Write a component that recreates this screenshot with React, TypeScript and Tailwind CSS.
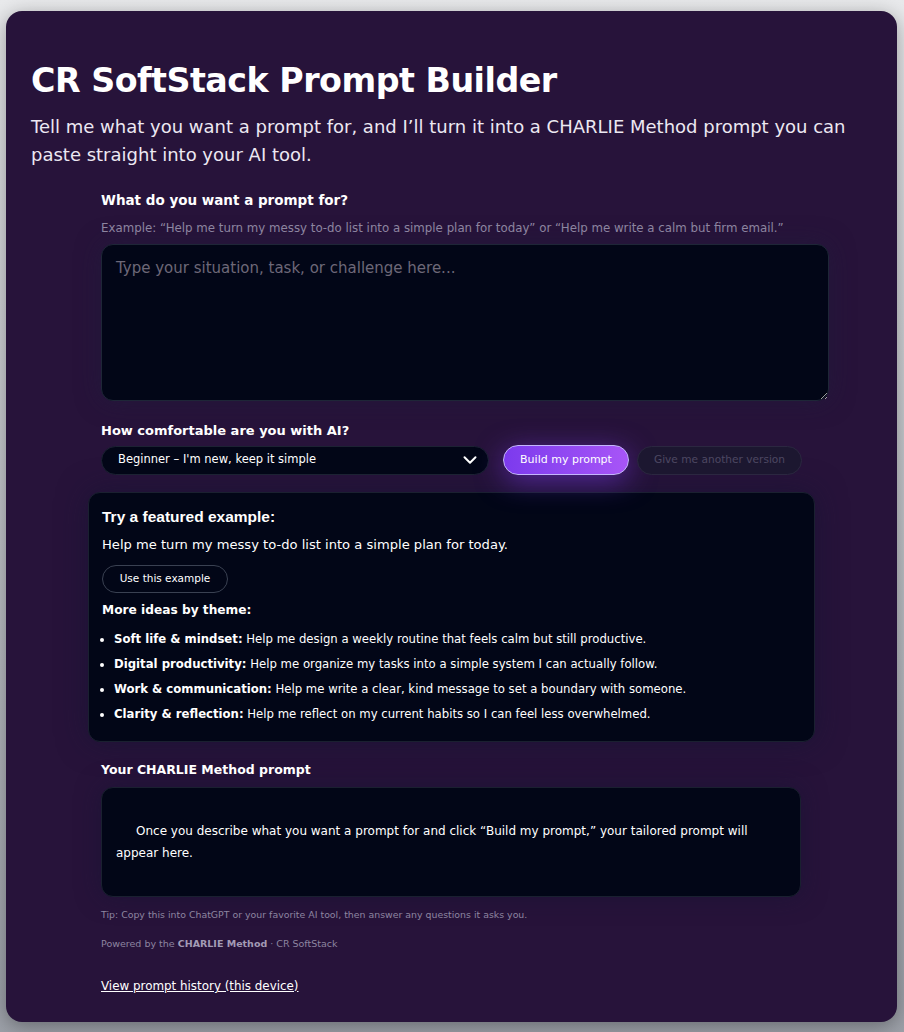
import { ChevronDown } from 'lucide-react';

const ideas = [
  { theme: 'Soft life & mindset:', text: 'Help me design a weekly routine that feels calm but still productive.' },
  { theme: 'Digital productivity:', text: 'Help me organize my tasks into a simple system I can actually follow.' },
  { theme: 'Work & communication:', text: 'Help me write a clear, kind message to set a boundary with someone.' },
  { theme: 'Clarity & reflection:', text: 'Help me reflect on my current habits so I can feel less overwhelmed.' },
];

export default function App() {
  return (
    <div
      className="min-h-screen bg-gradient-to-b from-[#e9eaec] to-[#9ca0a8] px-[6px] pt-[11px] pb-[12px]"
      style={{ fontFamily: '"DejaVu Sans", "Noto Sans", sans-serif' }}
    >
      <div className="w-[891px] rounded-2xl bg-[#27133a] px-[25px] pt-[50px] pb-[25px] text-white shadow-[0_4px_20px_rgba(0,0,0,0.35)]">
        <h1 className="text-[33.3px] leading-[40px] font-bold tracking-[-0.5px]">CR SoftStack Prompt Builder</h1>
        <p className="mt-[12px] text-[18px] leading-[28px] text-[#ece8f2]">
          Tell me what you want a prompt for, and I’ll turn it into a CHARLIE Method prompt you can paste straight into your AI tool.
        </p>

        <div className="ml-[70px] mt-[21px] w-[728px]">
          <label className="block text-[13.5px] leading-[20px] font-bold">What do you want a prompt for?</label>
          <p className="mt-[11px] text-[11.8px] leading-[14px] text-[#8d85a0]">
            Example: “Help me turn my messy to-do list into a simple plan for today” or “Help me write a calm but firm email.”
          </p>
          <textarea
            className="mt-[9px] block h-[157px] w-full rounded-xl border border-[#1e2637] bg-[#020617] px-[14px] py-[12px] text-[15px] text-white placeholder:text-[#6d6878] outline-none shadow-[0_0_24px_rgba(30,30,60,0.5)]"
            placeholder="Type your situation, task, or challenge here..."
          />

          <label className="mt-[20px] block text-[13px] leading-[20px] font-bold">How comfortable are you with AI?</label>
          <div className="mt-[4px] flex items-center gap-[14px]">
            <div className="flex h-[29px] w-[388px] items-center justify-between rounded-full border border-[#1c2233] bg-[#020617] pl-[16px] pr-[7px] text-[11.5px]">
              <span>Beginner – I'm new, keep it simple</span>
              <ChevronDown className="h-[22px] w-[22px]" strokeWidth={2.2} />
            </div>
            <button
              type="button"
              className="h-[30px] w-[126px] rounded-full border border-[#c4b5fd] bg-gradient-to-r from-[#7c3aed] to-[#a855f7] text-[11px] text-white shadow-[0_6px_28px_rgba(124,58,237,0.55)]"
            >
              Build my prompt
            </button>
            <button
              type="button"
              className="-ml-[6px] h-[29px] w-[165px] rounded-full border border-[#2b2740] bg-[#1c1730] text-[10.6px] text-[#4d4762]"
            >
              Give me another version
            </button>
          </div>

          <div className="-ml-[13px] mt-[17px] w-[727px] rounded-xl border border-[#1a2030] bg-[#020617] px-[13px] pt-[14px] pb-[10px] shadow-[0_0_30px_rgba(20,20,50,0.6)]">
            <h3
              className="text-[15.5px] leading-[20px] font-bold"
              style={{ fontFamily: '"Liberation Sans", Arial, sans-serif' }}
            >
              Try a featured example:
            </h3>
            <p className="mt-[8px] text-[13.1px] leading-[20px]">Help me turn my messy to-do list into a simple plan for today.</p>
            <button
              type="button"
              className="mt-[10px] h-[28px] w-[126px] rounded-full border border-[#3a4152] text-[10.5px]"
            >
              Use this example
            </button>
            <h4 className="mt-[8px] text-[12.2px] leading-[18px] font-bold">More ideas by theme:</h4>
            <ul className="mt-[12px] list-disc pl-[12px] text-[11.7px] leading-[17px]">
              {ideas.map((idea) => (
                <li key={idea.theme} className="mb-[8px]">
                  <b>{idea.theme}</b> {idea.text}
                </li>
              ))}
            </ul>
          </div>

          <label className="mt-[18px] block text-[12.5px] leading-[20px] font-bold">Your CHARLIE Method prompt</label>
          <div className="mt-[7px] flex h-[110px] w-[700px] items-center rounded-xl border border-[#1a2030] bg-[#020617] px-[14px] text-[12px] leading-[22px] shadow-[0_0_24px_rgba(20,20,50,0.5)]">
            <p className="indent-[20px]">
              Once you describe what you want a prompt for and click “Build my prompt,” your tailored prompt will appear here.
            </p>
          </div>
          <p className="mt-[12px] text-[9.4px] leading-[12px] text-[#8d85a0]">
            Tip: Copy this into ChatGPT or your favorite AI tool, then answer any questions it asks you.
          </p>
          <p className="mt-[17px] text-[9.5px] leading-[12px] text-[#8d85a0]">
            Powered by the <b className="text-[#a39bb5]">CHARLIE Method</b> · CR SoftStack
          </p>
          <a href="#" className="mt-[28px] inline-block text-[11.9px] leading-[16px] underline">
            View prompt history (this device)
          </a>
        </div>
      </div>
    </div>
  );
}
